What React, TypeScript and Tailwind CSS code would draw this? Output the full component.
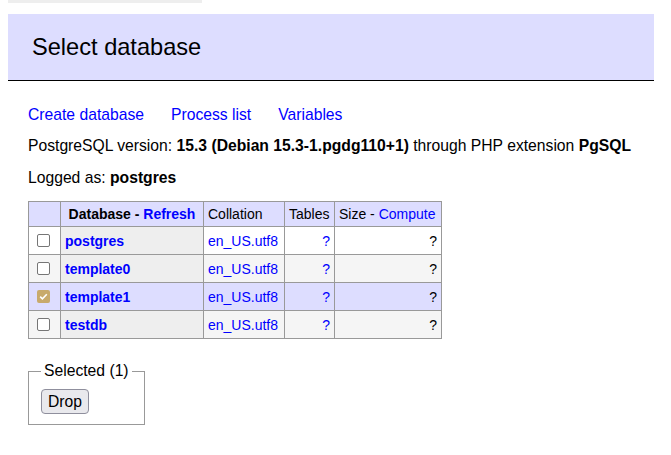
import React from 'react';

type Db = { name: string; checked?: boolean };

const databases: Db[] = [
  { name: 'postgres' },
  { name: 'template0' },
  { name: 'template1', checked: true },
  { name: 'testdb' },
];

function Checkbox({ checked }: { checked?: boolean }) {
  if (checked) {
    return (
      <div className="flex h-[13px] w-[13px] items-center justify-center rounded-[2px] bg-[#c8aa6c]">
        <svg width="11" height="11" viewBox="0 0 11 11" fill="none">
          <path d="M2.2 5.6 L4.4 7.8 L8.8 3.2" stroke="#fff" strokeWidth="1.6" />
        </svg>
      </div>
    );
  }
  return <div className="h-[13px] w-[13px] rounded-[2px] border border-[#767676] bg-white" />;
}

export default function App() {
  return (
    <div className="min-h-[455px] bg-white font-['Liberation_Sans',Arial,sans-serif] text-black">
      {/* strip left over from the language bar */}
      <div className="ml-2 h-[3px] w-[194px] bg-[#eee]" />

      <div className="ml-2 mt-[11px] w-[646px]">
        <h2 className="border-b border-black bg-[#ddf] px-6 py-[18px] text-[23.6px] font-normal leading-[30px]">
          Select database
        </h2>

        <div className="pl-5">
          <p className="mt-[24px] flex gap-[27px] text-[15.7px] leading-5">
            <a className="text-[#00f]">Create database</a>
            <a className="text-[#00f]">Process list</a>
            <a className="text-[#00f]">Variables</a>
          </p>
          <p className="mt-[11px] text-[15.7px] leading-5">
            PostgreSQL version: <b>15.3 (Debian 15.3-1.pgdg110+1)</b> through PHP extension <b>PgSQL</b>
          </p>
          <p className="mt-3 text-[15.7px] leading-5">
            Logged as: <b>postgres</b>
          </p>

          <table className="mt-[13px] w-[413px] table-fixed border-collapse text-[14px] leading-[18px]">
            <colgroup>
              <col className="w-[32px]" />
              <col className="w-[143px]" />
              <col className="w-[81px]" />
              <col className="w-[50px]" />
              <col className="w-[107px]" />
            </colgroup>
            <thead>
              <tr className="h-[25px] bg-[#ddf]">
                <td className="border border-[#999]" />
                <th className="border border-[#999] px-1 text-center font-bold">
                  Database - <a className="text-[#00f]">Refresh</a>
                </th>
                <td className="border border-[#999] px-1">Collation</td>
                <td className="border border-[#999] px-1">Tables</td>
                <td className="border border-[#999] px-1">
                  Size - <a className="text-[#00f]">Compute</a>
                </td>
              </tr>
            </thead>
            <tbody>
              {databases.map((db, i) => {
                const td = db.checked ? 'bg-[#ddf]' : i % 2 === 1 ? 'bg-[#f5f5f5]' : 'bg-white';
                const th = db.checked ? 'bg-[#ddf]' : 'bg-[#eee]';
                return (
                  <tr key={db.name} className="h-[28px]">
                    <td className={`border border-[#999] pl-[8px] ${td}`}>
                      <Checkbox checked={db.checked} />
                    </td>
                    <th className={`border border-[#999] px-1 text-left font-bold ${th}`}>
                      <a className="text-[#00f]">{db.name}</a>
                    </th>
                    <td className={`border border-[#999] px-1 ${td}`}>
                      <a className="text-[#00f]">en_US.utf8</a>
                    </td>
                    <td className={`border border-[#999] px-1 text-right ${td}`}>
                      <a className="text-[#00f]">?</a>
                    </td>
                    <td className={`border border-[#999] px-1 text-right ${td}`}>?</td>
                  </tr>
                );
              })}
            </tbody>
          </table>

          <fieldset className="mt-[22px] inline-block border border-[#999] px-3 pb-[10px] pt-2">
            <legend className="whitespace-nowrap px-[3px] text-[15.7px] leading-5">Selected (1)</legend>
            <button className="h-[25px] rounded-[4px] border border-[#8f8f9d] bg-[#e9e9ed] px-[6px] text-[15.7px] leading-5">
              Drop
            </button>
          </fieldset>
        </div>
      </div>
    </div>
  );
}
